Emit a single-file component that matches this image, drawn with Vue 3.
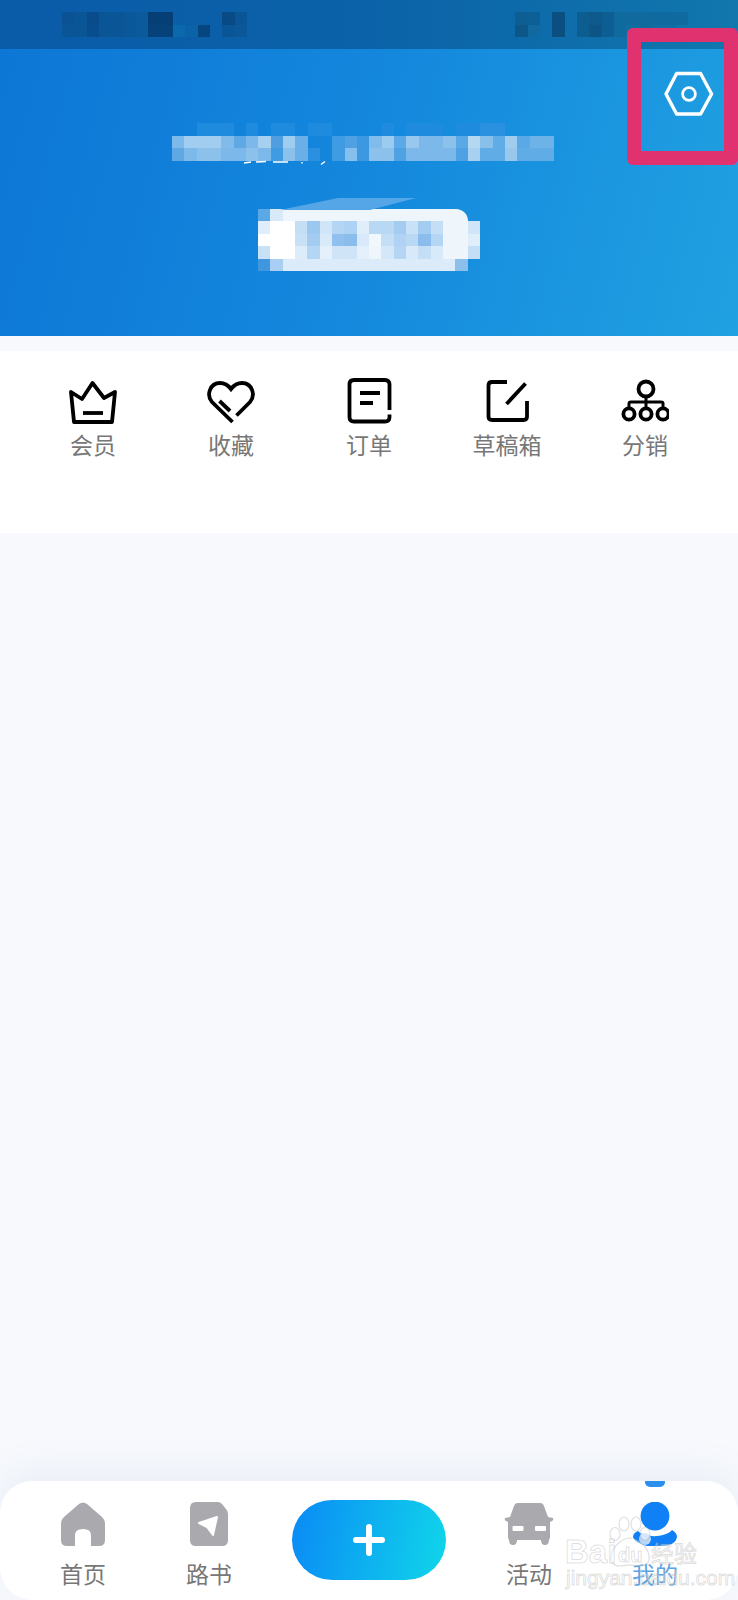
<script setup>
// mosaic rows, one hex per cell ('' = see through)
const bg = ''
const statusLeft = [
  ['#0a5293', '#0a5596', '#084c8c', '#0a5596', '#0a5596', '#0a5899', '#0a5a9c', '#063f76', '#063f76', bg, bg, bg, bg, '#074a85', '#0a5596'],
  ['#0a5596', '#0a5596', '#084e8e', '#0a5596', '#0a5596', '#0a5899', '#0a5a9c', '#06427a', '#06427a', '#0c68ad', '#0b62a6', '#06467f', bg, '#0a5596', '#0a5899']
]
const statusRight = [
  ['#0d5e92', '#0d6096', bg, '#0a4f80', bg, '#0e5d90', '#0e5a8c', '#0d5f93', '#106a9e', '#106a9e', '#106a9e', '#0f6a9f', '#0f6a9f', '#0f6a9f'],
  ['#0c5787', '#106a9f', bg, '#0a4f80', bg, '#0e5d90', '#0c5585', '#0d5f93', '#106a9e', '#116ea2', '#106a9e', '#116ea2', '#116ea2', bg]
]
const f = '#1f8bdf'
const nameRows = [
  [bg, bg, f, f, f, bg, f, bg, f, f, bg, f, f, bg, bg, bg, bg, f, bg, f, f, f, bg, f, f, '#2a90e0', '#2a90e0', bg, bg, bg, bg],
  ['#7db9e9', '#a0cdf0', '#a0cdf0', '#a0cdf0', '#80bbe9', '#5ea8e4', '#7cb9ea', '#a6d0f0', '#4f9fe0', '#9fcdf0', '#6aafe7', bg, bg, '#3f9be2', '#4ea2e4', '#3c98e0', '#7fbceb', '#9ccbf0', '#5ba9e6', '#98c8ee', '#7cb9ea', '#7cb9ea', '#8cc1ec', '#5aa8e5', '#b4d7f2', '#88c0ea', '#60ace6', '#a0cdee', '#5aa8e6', '#6eb3e8', '#6eb3e8'],
  ['#5ea8e4', '#7db9e9', '#8cc1ec', '#8cc1ec', '#7cb9ea', '#7cb9ea', '#8cc1ec', '#7cb9ea', '#3f9be2', '#8cc1ec', '#6aafe7', '#2a90df', bg, '#3f9be2', '#86bfeb', '#3c98e0', '#8cc1ec', '#8cc1ec', '#4ea2e4', '#7cb9ea', '#7cb9ea', '#7cb9ea', '#7cb9ea', '#4ea2e4', '#a8d1f1', '#60ace6', '#60ace6', '#98c8ee', '#60ace6', '#60ace6', '#60ace6']
]
const w = '#eef6fc'
const pillRows = [
  ['#5aa8e6', '#d8eaf9', w, w, w, w, w, w, w, w, w, w, w, w, w, w, w, ''],
  ['#dfeefa', '#fff', '#fff', '#c4dff5', '#9cc8f0', '#d0e6f8', '#b4d5f3', '#aed2f3', '#e0eefa', '#b8d8f4', '#b8d8f4', '#a4ccf1', '#c8e1f6', '#a4ccf1', '#c4dff5', w, w, '#d0e5f7'],
  ['#fff', '#fff', '#fff', '#c8e1f6', '#a4ccf1', '#d8eaf9', '#8fc0ee', '#8abcec', '#d8eaf9', '#f0f7fd', '#c4dff5', '#b0d3f3', '#b8d8f4', '#8cbcee', '#b4d5f3', w, w, '#e0eefa'],
  ['#c8e1f6', '#fff', '#fff', '#dcecf9', '#b4d5f3', '#e4f0fb', '#cfe4f7', '#cfe4f7', '#e4f0fb', w, '#d4e7f8', '#b4d5f3', '#d8eaf9', '#c4dff5', '#d8eaf9', w, w, '#c4dff5'],
  ['#3f97e0', '#a8cff1', '#dcebf9', '#dcebf9', '#dcebf9', '#dcebf9', '#dcebf9', '#dcebf9', '#dcebf9', '#dcebf9', '#dcebf9', '#dcebf9', '#dcebf9', '#dcebf9', '#dcebf9', '#dcebf9', '#8dbfec', '']
]

const menus = [
  { key: 'crown', label: '会员' },
  { key: 'heart', label: '收藏' },
  { key: 'order', label: '订单' },
  { key: 'edit', label: '草稿箱' },
  { key: 'net', label: '分销' }
]
</script>

<template>
  <div class="page">
    <header class="hero">
      <div class="status">
        <div class="mosaic">
          <div v-for="(row, i) in statusLeft" :key="i" class="m-row">
            <i v-for="(c, j) in row" :key="j" class="cell" :style="{ background: c }"></i>
          </div>
        </div>
        <div class="mosaic">
          <div v-for="(row, i) in statusRight" :key="i" class="m-row">
            <i v-for="(c, j) in row" :key="j" class="cell" :style="{ background: c }"></i>
          </div>
        </div>
      </div>

      <div class="mosaic name">
        <div v-for="(row, i) in nameRows" :key="i" class="m-row">
          <i v-for="(c, j) in row" :key="j" class="cell" :style="{ background: c }"></i>
        </div>
        <svg class="scraps" width="100" height="6" viewBox="0 0 100 6">
          <path d="M2 3 L9 2 M14 2 L24 1.5 M31 2 L46 2 M60 2 V3.5 M79 4.5 L83 1.5" stroke="#fff" stroke-width="1.4" fill="none" />
        </svg>
      </div>

      <div class="mosaic pill">
        <svg class="wedge" width="136" height="12" viewBox="0 0 136 12">
          <polygon points="0,12 58,0 136,0 90,12" fill="#55a6e6" />
        </svg>
        <div v-for="(row, i) in pillRows" :key="i" class="m-row">
          <i v-for="(c, j) in row" :key="j" class="cell tall" :style="{ background: c }"></i>
        </div>
      </div>

      <svg class="gear" width="50" height="46" viewBox="0 0 50 46">
        <polygon points="2,23 12.6,2.5 36.6,2.5 47.6,23 36.6,43 12.6,43" fill="none" stroke="#fff" stroke-width="3.4" stroke-linejoin="round" />
        <circle cx="25" cy="23" r="6.4" fill="none" stroke="#fff" stroke-width="2.8" />
      </svg>
      <div class="frame"></div>
    </header>

    <section class="menu">
      <div v-for="item in menus" :key="item.key" class="menu-item">
        <svg width="48" height="48" viewBox="0 0 48 48" fill="none" stroke="#000" stroke-width="3.8">
          <template v-if="item.key === 'crown'">
            <path d="M2 14 L13 21 L23.5 5 L35 20 L46 14 L43 44 H5 Z" stroke-linejoin="round" />
            <path d="M14 35 H34" />
          </template>
          <template v-else-if="item.key === 'heart'">
            <path d="M25.5 44 L5 24 C-1 17 3 5 13 5 C17 5 21 7 24 11 C27 7 31 5 35 5 C45 5 49 17 43 24 L29.5 37.5" />
            <path d="M12.5 23 L23 33" />
          </template>
          <template v-else-if="item.key === 'order'">
            <path d="M44.5 32 V6.5 Q44.5 2 40 2 H9 Q4.5 2 4.5 6.5 V39 Q4.5 43.5 9 43.5 H40 Q44.5 43.5 44.5 39 V36.5" />
            <path d="M15 15 H35 M15 25 H28" />
          </template>
          <template v-else-if="item.key === 'edit'">
            <path d="M24 4 H9 Q5.5 4 5.5 7.5 V38.5 Q5.5 42 9 42 H40.5 Q44 42 44 38.5 V23" />
            <path d="M42.5 5.5 L23.5 26" />
          </template>
          <template v-else>
            <circle cx="25" cy="11" r="7.5" />
            <path d="M25 18.5 V30 M8 30 V25.5 Q8 24 10 24 H40 Q42 24 42 25.5 V30" stroke-width="3" />
            <circle cx="8" cy="36" r="5.6" />
            <circle cx="25" cy="36" r="5.6" />
            <circle cx="42" cy="36" r="5.6" />
          </template>
        </svg>
        <span class="menu-label">{{ item.label }}</span>
      </div>
    </section>

    <nav class="tabbar">
      <div class="tab">
        <svg width="44" height="44" viewBox="0 0 44 44">
          <path fill="#aaaaae" d="M18 2 Q22 -1 26 2 L41 15 Q44 18 44 21 V38 Q44 44 38 44 H30 V33 Q30 27 22 27 Q14 27 14 33 V44 H6 Q0 44 0 38 V21 Q0 18 3 15 Z" />
        </svg>
        <span class="tab-label">首页</span>
      </div>
      <div class="tab">
        <svg width="38" height="44" viewBox="0 0 38 44">
          <path fill="#aaaaae" d="M6 0 H28 Q30 0 32 2 L36 7 Q38 9 38 12 V38 Q38 44 32 44 H6 Q0 44 0 38 V6 Q0 0 6 0 Z" />
          <path fill="#fff" stroke="#fff" stroke-width="2" stroke-linejoin="round" d="M9 21 L27 15 L23 33 L17 25 Z" />
        </svg>
        <span class="tab-label">路书</span>
      </div>
      <button class="add">
        <svg width="32" height="32" viewBox="0 0 32 32">
          <path d="M3 16 H29 M16 3 V29" stroke="#fff" stroke-width="6" stroke-linecap="round" />
        </svg>
      </button>
      <div class="tab">
        <svg width="50" height="44" viewBox="0 0 50 44">
          <path fill="#aaaaae" d="M14 1 H36 Q39 1 40 4 L44 15 L49 16 Q50 18 48 19 L46 20 V36 L45 38 Q45 43 41 43 Q37 43 37 38 H13 Q13 43 9 43 Q5 43 5 38 L4 36 V20 L2 19 Q0 18 1 16 L6 15 L10 4 Q11 1 14 1 Z" />
          <rect x="8.5" y="24" width="11" height="5" rx="1" fill="#fff" />
          <rect x="31" y="24" width="11" height="5" rx="1" fill="#fff" />
        </svg>
        <span class="tab-label">活动</span>
      </div>
      <div class="tab active">
        <i class="marker"></i>
        <svg width="44" height="44" viewBox="0 0 44 44">
          <circle cx="22" cy="14" r="14.4" fill="#0f80f5" />
          <path fill="#0f80f5" d="M5 29 C12 36 32 36 39 28 Q44 31 44 35 Q43 41 36 43 Q30 44 14 44 Q2 41 0 35 Q0 31 5 29 Z" />
          <circle cx="12" cy="37" r="6" fill="#b9d8fb" />
        </svg>
        <span class="tab-label">我的</span>
      </div>

      <div class="watermark">
        <svg class="paw" width="46" height="54" viewBox="0 0 46 54" fill="rgba(255,255,255,.4)" stroke="rgba(130,130,130,.25)" stroke-width="1.2">
          <ellipse cx="8" cy="18" rx="5" ry="6.5" />
          <ellipse cx="17" cy="8" rx="5" ry="7" />
          <ellipse cx="29" cy="8" rx="5" ry="7" />
          <ellipse cx="38" cy="18" rx="5" ry="6.5" />
          <path d="M23 22 C32 22 44 34 42 44 C40 52 30 50 23 49 C16 50 6 52 4 44 C2 34 14 22 23 22 Z" />
        </svg>
        <span class="wm-bai">Bai</span>
        <span class="wm-du">du</span>
        <span class="wm-cn">经验</span>
        <span class="wm-url">jingyan.baidu.com</span>
      </div>
    </nav>
  </div>
</template>

<style>
html, body {
  margin: 0;
  background: #f7f9fd;
}
</style>

<style scoped>
.page {
  position: relative;
  width: 738px;
  height: 1600px;
  overflow: hidden;
  background: #f7f9fd;
  display: flex;
  flex-direction: column;
  font-family: "Noto Sans CJK SC", "Noto Sans", sans-serif;
}

.hero {
  position: relative;
  height: 336px;
  background: linear-gradient(105deg, #0d76d6 0%, #1488dd 50%, #20a1e1 100%);
  display: flex;
  flex-direction: column;
}

.status {
  height: 49px;
  box-sizing: border-box;
  padding: 12px 50px 0 62px;
  display: flex;
  justify-content: space-between;
  background: linear-gradient(90deg, #0a5ba8 0%, #0b62a8 50%, #1177ad 100%);
}

.mosaic {
  display: flex;
  flex-direction: column;
}

.m-row {
  display: flex;
}

.cell {
  display: block;
  width: 12.33px;
  height: 12.5px;
  flex: none;
}

.cell.tall {
  height: 12.6px;
}

.name {
  position: relative;
  align-self: flex-start;
  margin: 74px 0 0 172px;
}

.scraps {
  position: absolute;
  left: 70px;
  top: 37px;
}

.pill {
  position: relative;
  align-self: flex-start;
  margin: 48px 0 0 258px;
  overflow: visible;
}

.pill .m-row:first-of-type .cell:nth-last-child(2) {
  border-top-right-radius: 12px;
}

.wedge {
  position: absolute;
  left: 22px;
  top: -11px;
}

.gear {
  position: absolute;
  left: 664px;
  top: 71px;
}

.frame {
  position: absolute;
  left: 627px;
  top: 28px;
  width: 111px;
  height: 137px;
  box-sizing: border-box;
  border: 14px solid #e0326f;
  border-radius: 6px;
}

.menu {
  margin-top: 15px;
  height: 182px;
  box-sizing: border-box;
  padding: 27px 24px 0;
  background: #fff;
  display: grid;
  grid-template-columns: repeat(5, 1fr);
  align-items: start;
}

.menu-item {
  display: flex;
  flex-direction: column;
  align-items: center;
  gap: 3px;
}

.menu-label {
  font-size: 23px;
  line-height: 30px;
  color: #777;
}

.tabbar {
  position: relative;
  margin-top: auto;
  height: 119px;
  box-sizing: border-box;
  padding: 21px 20px 0;
  background: #fff;
  border-radius: 32px;
  box-shadow: 0 -10px 36px rgba(120, 150, 190, 0.1);
  display: grid;
  grid-template-columns: 126px 126px 1fr 126px 126px;
  align-items: start;
}

.tab {
  position: relative;
  display: flex;
  flex-direction: column;
  align-items: center;
  gap: 12px;
}

.tab-label {
  font-size: 23px;
  line-height: 30px;
  color: #777;
}

.tab.active .tab-label {
  color: #5aa5e8;
}

.marker {
  position: absolute;
  left: 53px;
  top: -21px;
  width: 20px;
  height: 6px;
  border-radius: 0 0 5px 5px;
  background: #2b8fee;
}

.add {
  justify-self: center;
  width: 154px;
  height: 80px;
  margin-top: -2px;
  padding: 0;
  border: none;
  border-radius: 40px;
  background: linear-gradient(100deg, #0a8af5 0%, #10d6ea 100%);
  display: flex;
  align-items: center;
  justify-content: center;
}

.watermark {
  position: absolute;
  left: 0;
  top: 0;
  width: 100%;
  height: 100%;
  pointer-events: none;
  font-family: "Liberation Sans", sans-serif;
}

.watermark span {
  position: absolute;
  color: rgba(255, 255, 255, 0.4);
  -webkit-text-stroke: 1px rgba(130, 130, 130, 0.25);
  white-space: nowrap;
}

.paw {
  position: absolute;
  left: 607px;
  top: 35px;
}

.wm-bai {
  left: 565px;
  top: 53px;
  font-size: 33px;
  line-height: 36px;
  font-weight: 700;
}

.wm-du {
  left: 618px;
  top: 63px;
  font-size: 20px;
  line-height: 22px;
  font-weight: 700;
}

.wm-cn {
  left: 651px;
  top: 56px;
  font-size: 23px;
  line-height: 30px;
  font-family: "Noto Sans CJK SC", sans-serif;
}

.wm-url {
  left: 566px;
  top: 85px;
  font-size: 21px;
  line-height: 24px;
}
</style>
